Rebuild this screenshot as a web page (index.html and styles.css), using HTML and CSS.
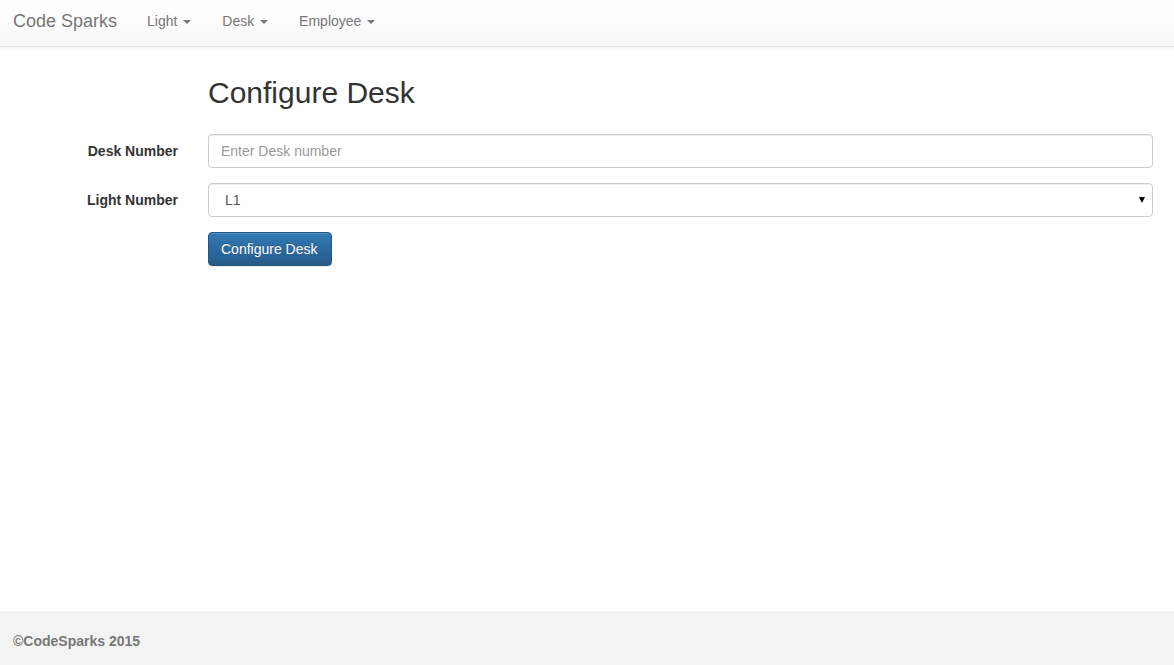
FILE: index.html
```html
<!DOCTYPE html>
<html lang="en">
  <head>
    <meta charset="UTF-8" />
    <title>Configure Desk</title>
    <link rel="stylesheet" href="styles.css">
  </head>
  <body>
    <nav class="navbar">
      <a class="brand" href="#">Code Sparks</a>
      <ul class="nav">
        <li><a href="#">Light <span class="caret"></span></a></li>
        <li><a href="#">Desk <span class="caret"></span></a></li>
        <li><a href="#">Employee <span class="caret"></span></a></li>
      </ul>
    </nav>

    <main class="content">
      <h2 class="page-title">Configure Desk</h2>

      <form class="form-horizontal">
        <div class="form-group">
          <label for="desk">Desk Number</label>
          <div class="field">
            <input type="text" id="desk" class="form-control" placeholder="Enter Desk number" />
          </div>
        </div>
        <div class="form-group">
          <label for="light">Light Number</label>
          <div class="field select-wrap">
            <select id="light" class="form-control">
              <option>L1</option>
              <option>L2</option>
            </select>
          </div>
        </div>
        <div class="form-group">
          <span class="label-spacer"></span>
          <div class="field">
            <button type="submit" class="btn-primary">Configure Desk</button>
          </div>
        </div>
      </form>
    </main>

    <footer class="footer">
      <p>&copy;CodeSparks 2015</p>
    </footer>
  </body>
</html>
```

FILE: styles.css
```css
html,
body {
  height: 100%;
}

body {
  margin: 0;
  font-family: "Liberation Sans", Arial, sans-serif;
  font-size: 14px;
  line-height: 20px;
  color: #333;
  background: #fff;
  display: flex;
  flex-direction: column;
}

.navbar {
  height: 46px;
  display: flex;
  align-items: center;
  background: linear-gradient(to bottom, #fff 0%, #f8f8f8 100%);
  border-bottom: 1px solid #e3e3e3;
  box-shadow: 0 1px 5px rgba(0, 0, 0, 0.075);
  padding-left: 13px;
}

.brand {
  font-size: 18px;
  color: #777;
  text-decoration: none;
  margin-top: -4px;
}

.nav {
  list-style: none;
  margin: 0 0 0 15px;
  padding: 0;
  display: flex;
}

.nav li {
  margin-right: 1px;
}

.nav a {
  display: block;
  padding: 0 15px;
  color: #777;
  text-decoration: none;
  margin-top: -4px;
}

.caret {
  display: inline-block;
  width: 0;
  height: 0;
  margin-left: 2px;
  vertical-align: middle;
  border-top: 4px solid #777;
  border-left: 4px solid transparent;
  border-right: 4px solid transparent;
}

.content {
  flex: 1;
  padding-right: 21px;
}

.page-title {
  margin: 29px 0 25px 208px;
  font-size: 30px;
  font-weight: 500;
  line-height: 33px;
  color: #333;
}

.form-group {
  display: flex;
  align-items: center;
  margin-bottom: 15px;
}

.form-group label,
.label-spacer {
  width: 178px;
  flex-shrink: 0;
  text-align: right;
  font-weight: bold;
  margin-right: 30px;
}

.field {
  flex: 1;
}

.form-control {
  display: block;
  width: 100%;
  box-sizing: border-box;
  height: 34px;
  padding: 6px 12px;
  font-family: inherit;
  font-size: 14px;
  color: #555;
  background: #fff;
  border: 1px solid #ccc;
  border-radius: 4px;
  box-shadow: inset 0 1px 1px rgba(0, 0, 0, 0.075);
}

.form-control::placeholder {
  color: #999;
}

.select-wrap {
  position: relative;
}

.select-wrap select {
  appearance: none;
  -webkit-appearance: none;
  padding-left: 16px;
}

.select-wrap::after {
  content: "";
  position: absolute;
  right: 8px;
  top: 14px;
  border-top: 6px solid #000;
  border-left: 3px solid transparent;
  border-right: 3px solid transparent;
  pointer-events: none;
}

.btn-primary {
  height: 34px;
  padding: 6px 13px 6px 12px;
  font-family: inherit;
  font-size: 14px;
  color: #fff;
  background: linear-gradient(to bottom, #337ab7 0%, #265a88 100%);
  border: 1px solid #245580;
  border-radius: 4px;
  box-shadow: inset 0 1px 0 rgba(255, 255, 255, 0.15), 0 1px 1px rgba(0, 0, 0, 0.075);
  text-shadow: 0 -1px 0 rgba(0, 0, 0, 0.2);
  cursor: pointer;
}

.footer {
  height: 54px;
  background: #f3f3f3;
  display: flex;
  align-items: center;
  padding-left: 13px;
}

.footer p {
  margin: 6px 0 0;
  font-weight: bold;
  color: #777;
}
```
